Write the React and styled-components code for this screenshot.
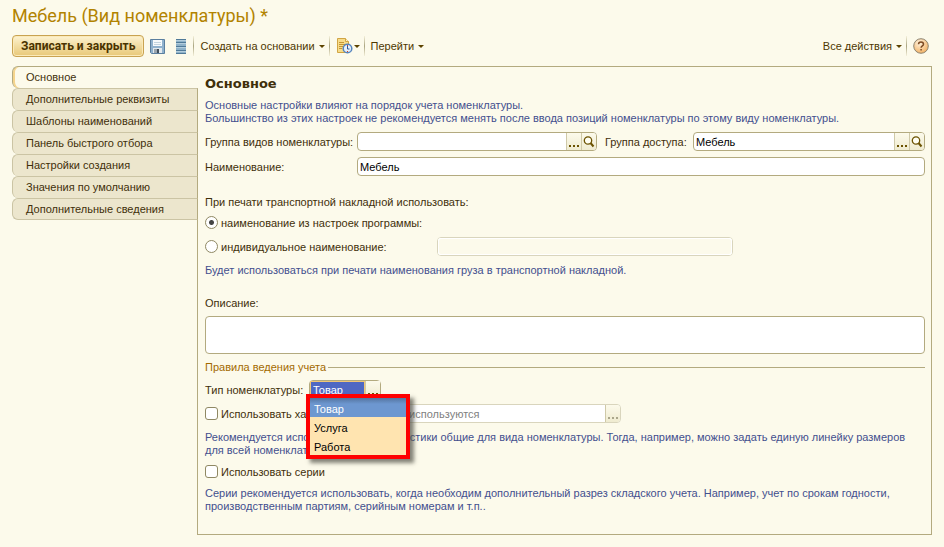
import React, { useState } from "react";
import styled, { createGlobalStyle } from "styled-components";

const GlobalStyle = createGlobalStyle`
  * {
    box-sizing: border-box;
  }
  body {
    margin: 0;
    background: #fcfaeb;
    color: #3f2f0a;
    font-family: "Liberation Sans", Arial, sans-serif;
    font-size: 11px;
    line-height: 13px;
  }
  button, input, textarea {
    margin: 0;
    font: inherit;
    color: inherit;
  }
`;

const Page = styled.div`
  padding: 4px 12px 12px;
`;

const Title = styled.h1`
  margin: 0;
  font-family: Roboto, sans-serif;
  font-size: 18px;
  font-weight: 400;
  line-height: 24px;
  color: #b28300;
`;

const Toolbar = styled.div`
  display: flex;
  align-items: center;
  height: 24px;
  margin: 6px 0 8px;
`;

const MainButton = styled.button`
  height: 22px;
  padding: 0 8px;
  border: 1px solid #c9a351;
  border-radius: 4px;
  background: linear-gradient(#fdf3d2, #f3dfa6 45%, #e8c878);
  box-shadow: inset 0 0 0 1px #fbeab9;
  color: #4a3300;
  font-family: Roboto, sans-serif;
  font-size: 12px;
  font-weight: 700;
  white-space: nowrap;
`;

const ToolButton = styled.button`
  display: flex;
  align-items: center;
  gap: ${(p) => (p.$icon ? 1 : 4)}px;
  height: 22px;
  padding: ${(p) => (p.$wide ? "0 5px 0 6px" : "0 3px 0 5px")};
  border: 0;
  background: none;
  color: #4d3700;
  white-space: nowrap;
`;

const Arrow = styled.span`
  border: 3px solid transparent;
  border-top-color: #5c4300;
  border-bottom: 0;
`;

const Separator = styled.span`
  width: 1px;
  height: 20px;
  margin: 0 1px;
  background: linear-gradient(#f4f0da, #aaa581, #f4f0da);
`;

const Spacer = styled.span`
  flex: 1;
`;

const Body = styled.div`
  display: flex;
  align-items: flex-start;
`;

const Tabs = styled.nav`
  display: flex;
  flex-direction: column;
  width: 186px;
  margin-right: -1px;
  flex: none;
`;

const Tab = styled.button`
  position: relative;
  height: 22px;
  padding: 0 13px;
  border: 1px solid #cbc4a4;
  border-right-color: #b3aa7f;
  border-bottom-width: ${(p) => (p.$last ? 1 : 0)}px;
  border-radius: 6px 0 0 6px;
  background: #ece6cd;
  text-align: left;
  ${(p) =>
    p.$active &&
    `
    border-color: #b3aa7f;
    border-right: 0;
    background: #fcfaeb;
    box-shadow: inset 2px 0 0 #f5d48c;
  `}
`;

const Panel = styled.main`
  flex: 1;
  min-width: 0;
  padding: 8px 6px 21px 7px;
  border: 1px solid #b3aa7f;
`;

const Heading = styled.h2`
  margin: 0 0 6px;
  font-family: "DejaVu Sans", sans-serif;
  font-size: 13px;
  line-height: 18px;
  font-weight: 700;
`;

const Note = styled.p`
  margin: 0;
  color: #434f8e;
`;

const Row = styled.div`
  display: flex;
  align-items: center;
  min-height: 19px;
  margin-top: ${(p) => p.$top || 0}px;
`;

const Label = styled.label`
  flex: none;
  width: ${(p) => (p.$width ? p.$width + "px" : "auto")};
  padding-top: 2px;
  white-space: nowrap;
`;

const Field = styled.div`
  position: relative;
  display: flex;
  flex: ${(p) => (p.$width ? `0 0 ${p.$width}px` : `${p.$grow || 1} 1 0`)};
  height: 19px;
  min-width: 0;
  margin-right: ${(p) => p.$gap || 0}px;
  border: 1px solid ${(p) => (p.$disabled ? "#d9d5bd" : "#b3aa7f")};
  border-radius: 4px;
  background: #fff;
`;

const TextInput = styled.input`
  flex: 1;
  min-width: 0;
  padding: 2px 2px 0;
  border: 0;
  border-radius: 3px;
  outline: 0;
  background: none;
  color: #000;
  &:disabled {
    color: #808080;
  }
`;

const PlainInput = styled(TextInput)`
  &:disabled {
    background: #fcfaeb;
    box-shadow: inset 0 0 0 1px #fff;
  }
`;

const SelectedInput = styled(TextInput)`
  margin: 1px;
  border-radius: 0;
  background: #4f68c3;
  color: #fff;
  outline: 1px solid #f0c777;
`;

const FieldButton = styled.button`
  display: flex;
  align-items: center;
  justify-content: center;
  width: 15px;
  padding: 0;
  border: 0;
  border-left: 1px solid #cfc9a8;
  background: linear-gradient(#fcfaeb, #efebd0);
  color: #6b5200;
  &:last-child {
    border-radius: 0 3px 3px 0;
  }
  &:disabled {
    color: #aaa68b;
  }
`;

const Radio = styled.input`
  appearance: none;
  flex: none;
  width: 13px;
  height: 13px;
  margin-right: 3px;
  border: 1px solid #8f8863;
  border-radius: 50%;
  background: #fff;
  &:checked {
    background: radial-gradient(circle, #444 0 2px, #fff 3px);
  }
`;

const Check = styled.input`
  appearance: none;
  flex: none;
  width: 13px;
  height: 13px;
  margin-right: 3px;
  border: 1px solid #8f8863;
  border-radius: 3px;
  background: #fff;
`;

const Area = styled.textarea`
  display: block;
  width: 100%;
  height: 38px;
  margin-top: 4px;
  padding: 2px;
  border: 1px solid #b3aa7f;
  border-radius: 4px;
  outline: 0;
  background: #fff;
  resize: none;
`;

const GroupTitle = styled.h3`
  display: flex;
  align-items: center;
  gap: 2px;
  margin: 7px 0 0;
  color: #a36a00;
  font-size: 11px;
  font-weight: 400;
  &::after {
    content: "";
    flex: 1;
    height: 1px;
    background: #b3aa7f;
  }
`;

// the drop-down lies over the rows below the field
const Menu = styled.ul`
  position: absolute;
  z-index: 2;
  top: 13px;
  left: -4px;
  width: 104px;
  margin: 0;
  padding: 0;
  border: 4px solid #fe0000;
  background: #ffe4b0;
  box-shadow: 4px 4px 4px rgba(80, 80, 70, 0.7);
  list-style: none;
`;

const MenuItem = styled.li`
  height: 19px;
  padding: 5px 4px 0;
  background: ${(p) => (p.$active ? "linear-gradient(#54749f, #6d97d0 6px)" : "none")};
  color: ${(p) => (p.$active ? "#fff" : "#000")};
  cursor: default;
`;

function SaveIcon() {
  return (
    <svg width="15" height="15" viewBox="0 0 15 15">
      <path d="M0.5 0.5h14v14h-13l-1-1z" fill="#8fb1cd" stroke="#5b7f9f" />
      <path d="M3 1h9v6H3z" fill="#f6fafc" />
      <path d="M4 3.500h7M4 5.500h7" stroke="#c3d4df" />
      <path d="M3 9h9v5H3z" fill="#e3e9ed" />
      <path d="M4 10h5v4H4z" fill="#9aa6b0" />
      <path d="M7 10h2v4H7z" fill="#42505c" />
    </svg>
  );
}

function ListIcon() {
  return (
    <svg width="11" height="15" viewBox="0 0 11 15">
      <path d="M0 0h10v15H0z" fill="#8fb2c9" />
      <path d="M0 0.500h10M0 3.500h10M0 7.500h10M0 11.500h10M0 14.500h10" stroke="#507a98" />
      <path d="M0 1.500h10M0 4.500h10M0 8.500h10M0 12.500h10" stroke="#b3cddc" />
    </svg>
  );
}

function ReportIcon() {
  return (
    <svg width="17" height="16" viewBox="0 0 17 16">
      <path d="M1.5 0.5h8l3 3v11h-11z" fill="#f7dc8a" stroke="#d1a544" />
      <path d="M9.500 0.500v3h3" fill="#fff3c8" stroke="#d1a544" />
      <path d="M3 4.500h5M3 6.500h7M3 8.500h4M3 10.500h3" stroke="#c49534" />
      <circle cx="11.500" cy="10.500" r="4.300" fill="#e8f1fa" stroke="#5584bd" strokeWidth="1.500" />
      <path d="M11.500 8v3h2" fill="none" stroke="#2d5a9c" />
      <path d="M11 7.500h1M11 13.500h1" stroke="#d8402a" />
    </svg>
  );
}

function HelpIcon() {
  return (
    <svg width="16" height="16" viewBox="0 0 16 16">
      <defs>
        <radialGradient id="help" cx="0.4" cy="0.3" r="0.8">
          <stop offset="0" stopColor="#fff3df" />
          <stop offset="1" stopColor="#f1aa55" />
        </radialGradient>
      </defs>
      <circle cx="8" cy="8" r="7.300" fill="url(#help)" stroke="#8e8573" />
      <path d="M5.500 6.200c0-3 5-3 5 0c0 1.700-2.400 1.600-2.400 3.500M8.100 11v1.600" fill="none" stroke="#7d4a22" strokeWidth="1.500" />
    </svg>
  );
}

function DotsIcon() {
  return (
    <svg width="12" height="17" viewBox="0 0 12 17">
      <path d="M1 12h2v2H1zM5 12h2v2H5zM9 12h2v2H9z" fill="currentColor" />
    </svg>
  );
}

function LensIcon() {
  return (
    <svg width="12" height="12" viewBox="0 0 12 12">
      <circle cx="5" cy="4.500" r="3.700" fill="#fffef2" stroke="#6b5200" strokeWidth="1.300" />
      <path d="M7.500 7l3 3.500" stroke="#6b5200" strokeWidth="2" />
    </svg>
  );
}

const tabs = [
  "Основное",
  "Дополнительные реквизиты",
  "Шаблоны наименований",
  "Панель быстрого отбора",
  "Настройки создания",
  "Значения по умолчанию",
  "Дополнительные сведения",
];

const types = ["Товар", "Услуга", "Работа"];

function LookupField({ id, value, gap, grow }) {
  return (
    <Field $gap={gap} $grow={grow}>
      <TextInput id={id} defaultValue={value} />
      <FieldButton aria-label="Выбрать"><DotsIcon /></FieldButton>
      <FieldButton aria-label="Открыть"><LensIcon /></FieldButton>
    </Field>
  );
}

function App() {
  const [tab, setTab] = useState(0);
  const [type, setType] = useState("Товар");
  const [open, setOpen] = useState(true);

  const chooseType = (name) => {
    setType(name);
    setOpen(false);
  };

  return (
    <Page>
      <GlobalStyle />
      <Title>Мебель (Вид номенклатуры) *</Title>
      <Toolbar>
        <MainButton>Записать и закрыть</MainButton>
        <ToolButton $wide aria-label="Записать"><SaveIcon /></ToolButton>
        <ToolButton $wide aria-label="Список"><ListIcon /></ToolButton>
        <Separator />
        <ToolButton>Создать на основании <Arrow /></ToolButton>
        <Separator />
        <ToolButton $icon aria-label="Отчеты"><ReportIcon /><Arrow /></ToolButton>
        <Separator />
        <ToolButton>Перейти <Arrow /></ToolButton>
        <Spacer />
        <ToolButton>Все действия <Arrow /></ToolButton>
        <Separator />
        <ToolButton aria-label="Справка"><HelpIcon /></ToolButton>
      </Toolbar>
      <Body>
        <Tabs>
          {tabs.map((name, i) => (
            <Tab key={name} $active={i === tab} $last={i === tabs.length - 1} onClick={() => setTab(i)}>
              {name}
            </Tab>
          ))}
        </Tabs>
        <Panel>
          <Heading>Основное</Heading>
          <Note>
            Основные настройки влияют на порядок учета номенклатуры.<br />
            Большинство из этих настроек не рекомендуется менять после ввода позиций номенклатуры по этому виду номенклатуры.
          </Note>
          <Row $top={7}>
            <Label htmlFor="group" $width={152}>Группа видов номенклатуры:</Label>
            <LookupField id="group" value="" gap={8} grow={30} />
            <Label htmlFor="access" $width={88}>Группа доступа:</Label>
            <LookupField id="access" value="Мебель" grow={29} />
          </Row>
          <Row $top={6}>
            <Label htmlFor="name" $width={152}>Наименование:</Label>
            <Field><PlainInput id="name" defaultValue="Мебель" /></Field>
          </Row>
          <Row $top={17}>При печати транспортной накладной использовать:</Row>
          <Row $top={1}>
            <Radio type="radio" name="print" id="common" defaultChecked />
            <Label htmlFor="common">наименование из настроек программы:</Label>
          </Row>
          <Row $top={5}>
            <Radio type="radio" name="print" id="own" />
            <Label htmlFor="own" $width={216}>индивидуальное наименование:</Label>
            <Field $width={296} $disabled><PlainInput aria-label="Индивидуальное наименование" disabled /></Field>
          </Row>
          <Row $top={5}><Note>Будет использоваться при печати наименования груза в транспортной накладной.</Note></Row>
          <Row $top={13}><Label htmlFor="about">Описание:</Label></Row>
          <Area id="about" />
          <GroupTitle>Правила ведения учета</GroupTitle>
          <Row $top={6}>
            <Label htmlFor="type" $width={104}>Тип номенклатуры:</Label>
            <Field $width={72}>
              <SelectedInput id="type" value={type} readOnly />
              <FieldButton aria-label="Выбрать тип" onClick={() => setOpen(!open)}><DotsIcon /></FieldButton>
              {open && (
                <Menu role="listbox">
                  {types.map((name) => (
                    <MenuItem key={name} role="option" aria-selected={name === type} $active={name === type} onClick={() => chooseType(name)}>
                      {name}
                    </MenuItem>
                  ))}
                </Menu>
              )}
            </Field>
          </Row>
          <Row $top={5}>
            <Check type="checkbox" id="traits" />
            <Label htmlFor="traits" $width={168}>Использовать характеристики</Label>
            <Field $width={232} $disabled>
              <TextInput aria-label="Характеристики" defaultValue="Не используются" disabled />
              <FieldButton aria-label="Выбрать" disabled><DotsIcon /></FieldButton>
            </Field>
          </Row>
          <Row $top={8}>
            <Note>
              Рекомендуется использовать характеристики общие для вида номенклатуры. Тогда, например, можно задать единую линейку размеров для всей номенклатуры.
            </Note>
          </Row>
          <Row $top={5}>
            <Check type="checkbox" id="series" />
            <Label htmlFor="series">Использовать серии</Label>
          </Row>
          <Row $top={6}>
            <Note>
              Серии рекомендуется использовать, когда необходим дополнительный разрез складского учета. Например, учет по срокам годности, производственным партиям, серийным номерам и т.п..
            </Note>
          </Row>
        </Panel>
      </Body>
    </Page>
  );
}

export default App;
